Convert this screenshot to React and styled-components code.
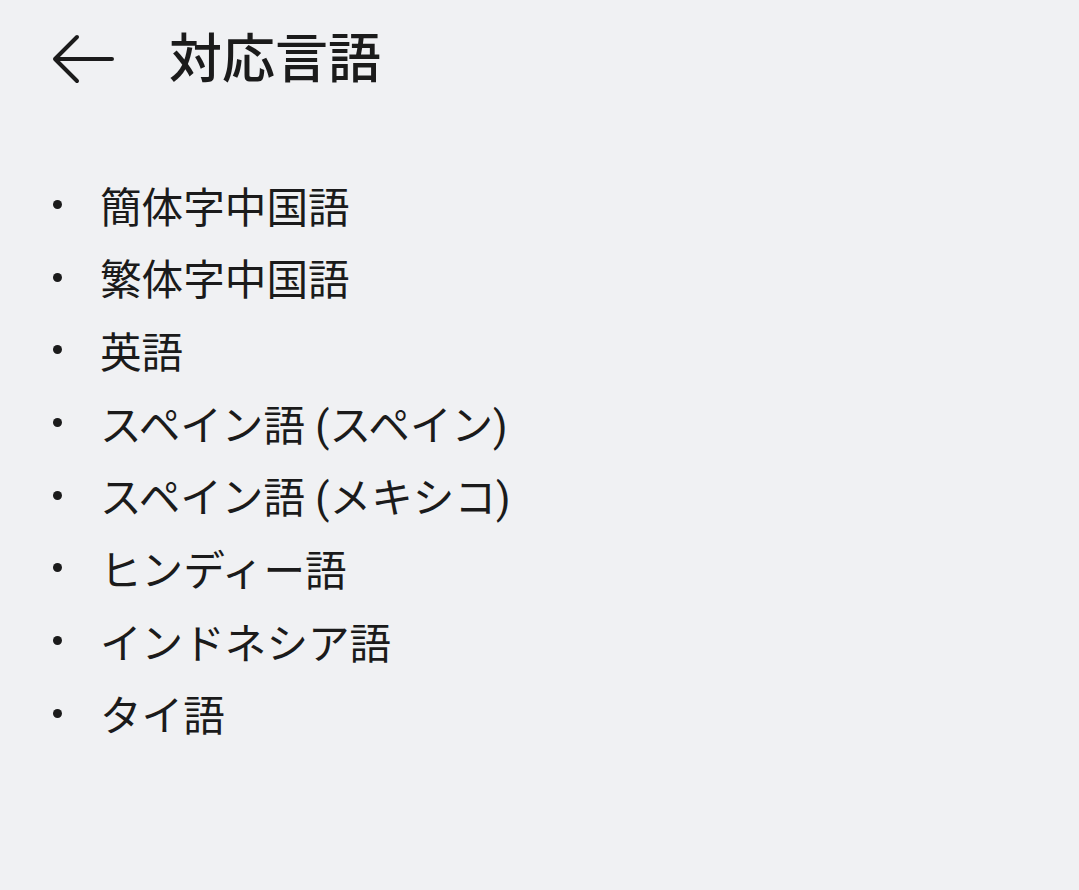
import React from "react";
import styled, { createGlobalStyle } from "styled-components";

const Global = createGlobalStyle`
  html, body {
    margin: 0;
    padding: 0;
    background: #f0f1f3;
  }
  body {
    font-family: Roboto, "Noto Sans CJK JP", sans-serif;
    color: #1b1b1b;
  }
`;

const Page = styled.div`
  width: 1079px;
  min-height: 890px;
  background: #f0f1f3;
  box-sizing: border-box;
  padding: 0 0 0 52px;
`;

const Header = styled.header`
  display: flex;
  align-items: flex-start;
  height: 122px;
  padding-top: 34px;
  box-sizing: border-box;
`;

const BackButton = styled.button`
  display: flex;
  align-items: center;
  justify-content: center;
  width: 62px;
  height: 50px;
  padding: 0;
  margin: 0;
  border: none;
  background: none;
  color: #1b1b1b;
  cursor: pointer;
`;

const Title = styled.h1`
  margin: 0 0 0 55px;
  font-size: 53px;
  font-weight: 500;
  line-height: 1;
`;

const List = styled.ul`
  list-style: none;
  margin: 0;
  padding: 50px 0 0 0;
`;

const Item = styled.li`
  display: flex;
  align-items: center;
  height: 72.7px;
  font-size: 41.6px;
  line-height: 1;
  color: #1b1b1b;
`;

const Bullet = styled.span`
  width: 9px;
  height: 9px;
  border-radius: 50%;
  background: #1b1b1b;
  margin-left: 1px;
  margin-right: 38px;
  margin-bottom: 8px;
  flex: none;
`;

const Label = styled.span`
  white-space: nowrap;
`;

const languages = [
  "簡体字中国語",
  "繁体字中国語",
  "英語",
  "スペイン語 (スペイン)",
  "スペイン語 (メキシコ)",
  "ヒンディー語",
  "インドネシア語",
  "タイ語",
];

function ArrowLeft() {
  return (
    <svg width="62" height="50" viewBox="0 0 62 50" fill="none">
      <path
        d="M60 25H3M25 3L3 25L25 47"
        stroke="currentColor"
        strokeWidth="4"
        strokeLinecap="round"
        strokeLinejoin="round"
      />
    </svg>
  );
}

export default function App() {
  return (
    <Page>
      <Global />
      <Header>
        <BackButton aria-label="戻る">
          <ArrowLeft />
        </BackButton>
        <Title>対応言語</Title>
      </Header>
      <List>
        {languages.map((name) => (
          <Item key={name}>
            <Bullet />
            <Label>{name}</Label>
          </Item>
        ))}
      </List>
    </Page>
  );
}
